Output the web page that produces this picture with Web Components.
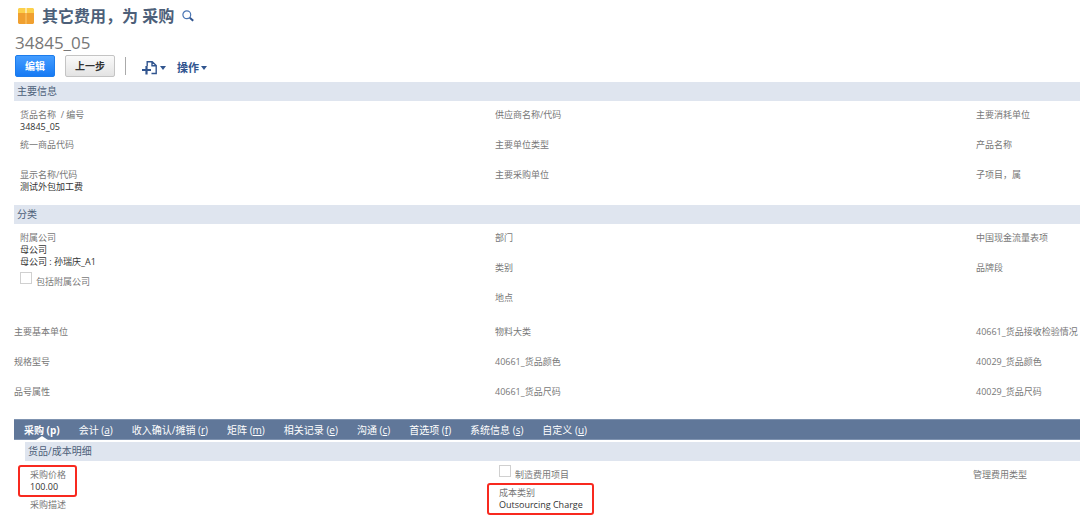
<!DOCTYPE html>
<html lang="zh-CN">
<head>
<meta charset="utf-8">
<title>其它费用，为 采购</title>
<style>
body{margin:0;background:#fff;color:#333;font-family:"Open Sans","Noto Sans CJK SC",sans-serif;font-size:9px;line-height:12px}
</style>
</head>
<body>
<item-page></item-page>
<script>
const define = (name, html, setup) => {
  const template = document.createElement('template');
  template.innerHTML = html;
  customElements.define(name, class extends HTMLElement {
    constructor() {
      super();
      this.attachShadow({mode: 'open'}).append(template.content.cloneNode(true));
    }
    connectedCallback() { if (setup) setup(this, this.shadowRoot); }
  });
};

// Label with an optional value below it
define('record-field', `
<style>
:host{display:block;min-height:24px;margin-bottom:6px;white-space:nowrap}
.box{position:relative;width:fit-content}
.label{color:#777}
.value{color:#333}
:host([marked]) .box::after{content:"";position:absolute;inset:-4px -11px -4px -12px;border:2px solid #f8291f;border-radius:3px}
</style>
<div class="box"><div class="label"><slot name="label"></slot></div><div class="value"><slot></slot></div></div>`);

define('check-field', `
<style>
:host{display:block;height:22px;white-space:nowrap}
label{display:flex;align-items:flex-end;gap:4px;height:16px;color:#777}
input{appearance:none;box-sizing:border-box;width:12px;height:12px;margin:0 0 4px;border:1px solid #d0d0d0;background:#fff}
</style>
<label><input type="checkbox"><slot></slot></label>`);

define('field-columns', `
<style>
:host{display:grid;grid-template-columns:37fr 37fr 8fr;padding-top:8px}
::slotted(*){min-width:0}
::slotted(:first-child){padding-left:var(--indent,6px)}
</style><slot></slot>`);

define('field-section', `
<style>
:host{display:block}
h2{margin:0;padding:0 3px;background:#dfe5ef;color:#4d5f79;font-size:10px;line-height:19px;font-weight:400}
</style><h2><slot name="title"></slot></h2><slot></slot>`);

define('action-button', `
<style>
:host{display:block}
button{box-sizing:border-box;height:22px;padding:0 9px;border:1px solid #c4c4c4;border-radius:2px;background:linear-gradient(#fafafa,#e3e3e3);color:#333;font:700 10px/20px "Open Sans","Noto Sans CJK SC",sans-serif}
:host([primary]) button{border-color:#1c7cec;background:linear-gradient(#449dff,#167af4);color:#fff}
</style><button type="button"><slot></slot></button>`);

define('menu-button', `
<style>
:host{display:block}
button{display:flex;align-items:center;gap:2px;height:20px;padding:0;border:0;background:none;color:#31558f;font:700 11px/20px "Open Sans","Noto Sans CJK SC",sans-serif}
.caret{width:6px;height:4px;fill:currentColor}
</style><button type="button"><slot></slot><svg class="caret" viewBox="0 0 6 4"><path d="M0 0h6L3 4z"/></svg></button>`,
(host, root) => { if (host.title) root.querySelector('button').setAttribute('aria-label', host.title); });

define('page-heading', `
<style>
:host{display:block}
.title{display:flex;align-items:center;height:32px;padding-left:4px}
h1{margin:0 8px;color:#4d5f79;font-size:16px;line-height:24px;font-weight:700}
.package{width:16px;height:16px}
.search{display:flex;padding:0;border:0;background:none}
.search svg{width:12px;height:12px}
.number{padding-left:1px;color:#777;font-size:17px;line-height:22px}
.actions{display:flex;align-items:center;height:23px;padding:0 0 4px 1px}
.actions action-button + action-button{margin-left:10px}
hr{width:1px;height:18px;margin:0 16px 0 10px;border:0;background:#aaa}
menu-button{margin:4px 11px 0 0}
.new{width:16px;height:14px}
</style>
<div class="title">
<svg class="package" viewBox="0 0 16 16"><path fill="#fcd04b" d="M1 0h6v5H0V1zM9 0h6l1 1v4H9z"/><path fill="#f0a030" d="M0 5h7v11H1l-1-1zM9 5h7v10l-1 1H9z"/><path fill="#fde7a6" d="M7 0h2v5H7z"/><path fill="#f7b54e" d="M7 5h2v11H7z"/></svg>
<h1>其它费用，为 采购</h1>
<button class="search" type="button" aria-label="搜索"><svg viewBox="0 0 12 12" fill="none"><circle cx="4.8" cy="4.8" r="3.9" stroke="#4a76b4" stroke-width="1.2"/><path d="m7.8 7.8 3.4 3" stroke="#31558f" stroke-width="2"/></svg></button>
</div>
<div class="number">34845_05</div>
<div class="actions">
<action-button primary>编辑</action-button><action-button>上一步</action-button><hr>
<menu-button title="新建"><svg class="new" viewBox="0 0 16 14" fill="none" stroke="#31558f"><path stroke-width="1.4" d="M5.2 5V.8h5l4 3.7v8H9.5M10 .8v4h4"/><path stroke-width="2.2" d="M0 9h9M4.5 5v8.5"/></svg></menu-button>
<menu-button>操作</menu-button>
</div>`);

define('tab-item', `
<style>
:host{display:block}
button{position:relative;display:block;height:21px;padding:0 9px;border:0;background:none;color:#fff;font:400 10px/20px "Open Sans","Noto Sans CJK SC",sans-serif;white-space:nowrap}
:host([active]) button{font-weight:700}
:host([active]) button::after{content:"";position:absolute;left:50%;bottom:0;margin-left:-6px;border:solid transparent;border-width:0 6px 4px;border-bottom-color:#fff}
</style><button type="button" role="tab"><slot></slot></button>`,
(host, root) => root.querySelector('button').setAttribute('aria-selected', host.hasAttribute('active')));

define('tab-bar', `
<style>
:host{display:flex;gap:1px;padding-left:1px;background:#607799;box-shadow:inset 0 1px #7f93b0,inset 0 -1px #7f93b0}
</style><slot></slot>`,
host => host.setAttribute('role', 'tablist'));

define('item-page', `
<style>
:host{display:block;padding-left:14px;overflow:hidden}
.main{margin:1px 0 6px}
.plain{--indent:0px;padding:4px 0 3px}
.group{margin-bottom:4px}
.detail{margin:2px 0 0 11px}
.detail field-columns{--indent:5px;grid-template-columns:31fr 31fr 7fr}
.detail check-field{margin-top:-4px}
</style>
<page-heading></page-heading>
<field-section class="main"><span slot="title">主要信息</span>
<field-columns>
<div><record-field><span slot="label">货品名称&nbsp; / 编号</span>34845_05</record-field><record-field><span slot="label">统一商品代码</span></record-field><record-field><span slot="label">显示名称/代码</span>测试外包加工费</record-field></div>
<div><record-field><span slot="label">供应商名称/代码</span></record-field><record-field><span slot="label">主要单位类型</span></record-field><record-field><span slot="label">主要采购单位</span></record-field></div>
<div><record-field><span slot="label">主要消耗单位</span></record-field><record-field><span slot="label">产品名称</span></record-field><record-field><span slot="label">子项目，属</span></record-field></div>
</field-columns></field-section>
<field-section><span slot="title">分类</span>
<field-columns>
<div><record-field class="group"><span slot="label">附属公司</span>母公司<br>母公司 : 孙瑞庆_A1</record-field><check-field>包括附属公司</check-field></div>
<div><record-field><span slot="label">部门</span></record-field><record-field><span slot="label">类别</span></record-field><record-field><span slot="label">地点</span></record-field></div>
<div><record-field><span slot="label">中国现金流量表项</span></record-field><record-field><span slot="label">品牌段</span></record-field></div>
</field-columns></field-section>
<field-columns class="plain">
<div><record-field><span slot="label">主要基本单位</span></record-field><record-field><span slot="label">规格型号</span></record-field><record-field><span slot="label">品号属性</span></record-field></div>
<div><record-field><span slot="label">物料大类</span></record-field><record-field><span slot="label">40661_货品颜色</span></record-field><record-field><span slot="label">40661_货品尺码</span></record-field></div>
<div><record-field><span slot="label">40661_货品接收检验情况</span></record-field><record-field><span slot="label">40029_货品颜色</span></record-field><record-field><span slot="label">40029_货品尺码</span></record-field></div>
</field-columns>
<tab-bar>
<tab-item active>采购 (p)</tab-item><tab-item>会计 (<u>a</u>)</tab-item><tab-item>收入确认/摊销 (<u>r</u>)</tab-item><tab-item>矩阵 (<u>m</u>)</tab-item><tab-item>相关记录 (<u>e</u>)</tab-item><tab-item>沟通 (<u>c</u>)</tab-item><tab-item>首选项 (<u>f</u>)</tab-item><tab-item>系统信息 (<u>s</u>)</tab-item><tab-item>自定义 (<u>u</u>)</tab-item>
</tab-bar>
<field-section class="detail"><span slot="title">货品/成本明细</span>
<field-columns>
<div><record-field marked><span slot="label">采购价格</span>100.00</record-field><record-field><span slot="label">采购描述</span></record-field></div>
<div><check-field>制造费用项目</check-field><record-field marked><span slot="label">成本类别</span>Outsourcing Charge</record-field></div>
<div><record-field><span slot="label">管理费用类型</span></record-field></div>
</field-columns></field-section>`);
</script>
</body>
</html>
